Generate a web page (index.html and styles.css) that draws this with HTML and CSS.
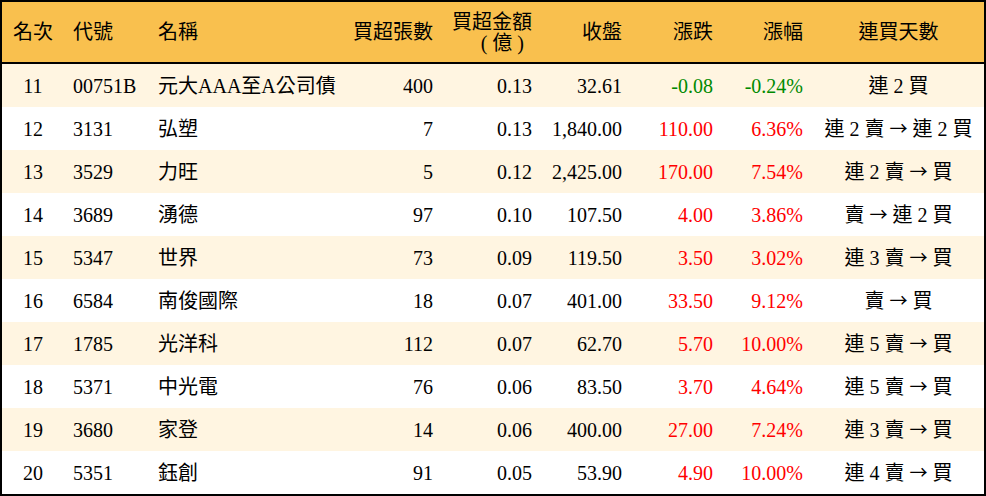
FILE: index.html
```html
<!DOCTYPE html>
<html lang="zh-Hant">
<head>
<meta charset="utf-8">
<title>買超排行</title>
<link rel="stylesheet" href="styles.css">
</head>
<body>
<table class="rank">
  <colgroup>
    <col class="c1"><col class="c2"><col class="c3"><col class="c4"><col class="c5"><col class="c6"><col class="c7"><col class="c8"><col class="c9">
  </colgroup>
  <thead>
    <tr>
      <th class="ctr">名次</th>
      <th class="lft l2">代號</th>
      <th class="lft l3">名稱</th>
      <th class="rgt">買超張數</th>
      <th class="rgt two"><span class="ln">買超金額</span><span class="ln sub">( 億 )</span></th>
      <th class="rgt">收盤</th>
      <th class="rgt">漲跌</th>
      <th class="rgt">漲幅</th>
      <th class="ctr">連買天數</th>
    </tr>
  </thead>
  <tbody>
    <tr class="odd"><td class="ctr">11</td><td class="lft l2">00751B</td><td class="lft l3">元大AAA至A公司債</td><td class="rgt">400</td><td class="rgt">0.13</td><td class="rgt">32.61</td><td class="rgt down">-0.08</td><td class="rgt down">-0.24%</td><td class="ctr">連 2 買</td></tr>
    <tr><td class="ctr">12</td><td class="lft l2">3131</td><td class="lft l3">弘塑</td><td class="rgt">7</td><td class="rgt">0.13</td><td class="rgt">1,840.00</td><td class="rgt up">110.00</td><td class="rgt up">6.36%</td><td class="ctr">連 2 賣 <span class="arw">→</span> 連 2 買</td></tr>
    <tr class="odd"><td class="ctr">13</td><td class="lft l2">3529</td><td class="lft l3">力旺</td><td class="rgt">5</td><td class="rgt">0.12</td><td class="rgt">2,425.00</td><td class="rgt up">170.00</td><td class="rgt up">7.54%</td><td class="ctr">連 2 賣 <span class="arw">→</span> 買</td></tr>
    <tr><td class="ctr">14</td><td class="lft l2">3689</td><td class="lft l3">湧德</td><td class="rgt">97</td><td class="rgt">0.10</td><td class="rgt">107.50</td><td class="rgt up">4.00</td><td class="rgt up">3.86%</td><td class="ctr">賣 <span class="arw">→</span> 連 2 買</td></tr>
    <tr class="odd"><td class="ctr">15</td><td class="lft l2">5347</td><td class="lft l3">世界</td><td class="rgt">73</td><td class="rgt">0.09</td><td class="rgt">119.50</td><td class="rgt up">3.50</td><td class="rgt up">3.02%</td><td class="ctr">連 3 賣 <span class="arw">→</span> 買</td></tr>
    <tr><td class="ctr">16</td><td class="lft l2">6584</td><td class="lft l3">南俊國際</td><td class="rgt">18</td><td class="rgt">0.07</td><td class="rgt">401.00</td><td class="rgt up">33.50</td><td class="rgt up">9.12%</td><td class="ctr">賣 <span class="arw">→</span> 買</td></tr>
    <tr class="odd"><td class="ctr">17</td><td class="lft l2">1785</td><td class="lft l3">光洋科</td><td class="rgt">112</td><td class="rgt">0.07</td><td class="rgt">62.70</td><td class="rgt up">5.70</td><td class="rgt up">10.00%</td><td class="ctr">連 5 賣 <span class="arw">→</span> 買</td></tr>
    <tr><td class="ctr">18</td><td class="lft l2">5371</td><td class="lft l3">中光電</td><td class="rgt">76</td><td class="rgt">0.06</td><td class="rgt">83.50</td><td class="rgt up">3.70</td><td class="rgt up">4.64%</td><td class="ctr">連 5 賣 <span class="arw">→</span> 買</td></tr>
    <tr class="odd"><td class="ctr">19</td><td class="lft l2">3680</td><td class="lft l3">家登</td><td class="rgt">14</td><td class="rgt">0.06</td><td class="rgt">400.00</td><td class="rgt up">27.00</td><td class="rgt up">7.24%</td><td class="ctr">連 3 賣 <span class="arw">→</span> 買</td></tr>
    <tr><td class="ctr">20</td><td class="lft l2">5351</td><td class="lft l3">鈺創</td><td class="rgt">91</td><td class="rgt">0.05</td><td class="rgt">53.90</td><td class="rgt up">4.90</td><td class="rgt up">10.00%</td><td class="ctr">連 4 賣 <span class="arw">→</span> 買</td></tr>
  </tbody>
</table>
</body>
</html>
```

FILE: styles.css
```css
html, body {
  margin: 0;
  padding: 0;
  background: #ffffff;
}

body {
  font-family: "Liberation Serif", "Noto Sans CJK TC", serif;
  font-size: 20px;
  color: #000000;
}

.rank {
  width: 986px;
  table-layout: fixed;
  border-collapse: separate;
  border-spacing: 0;
  border: 2px solid #000000;
  box-sizing: border-box;
}

.c1 { width: 62px; }
.c2 { width: 86px; }
.c3 { width: 190px; }
.c4 { width: 103px; }
.c5 { width: 99px; }
.c6 { width: 90px; }
.c7 { width: 91px; }
.c8 { width: 90px; }
.c9 { width: 171px; }

.rank th,
.rank td {
  padding: 0;
  white-space: nowrap;
  vertical-align: middle;
  font-weight: normal;
  overflow: hidden;
}

.rank th {
  height: 60px;
  background: #f9c04e;
  border-bottom: 2px solid #000000;
  line-height: 20px;
}

.rank th .ln {
  display: block;
  height: 20px;
  line-height: 20px;
}

.rank th .sub {
  margin-top: 1px;
  padding-right: 8px;
}

.rank td {
  height: 43px;
  line-height: 22px;
}

.rank tr.odd td {
  background: #fff5e1;
}

.arw {
  font-family: "Noto Sans CJK TC", sans-serif;
  font-size: 18px;
  line-height: 10px;
  display: inline-block;
  vertical-align: 1px;
}

.ctr { text-align: center; }
.lft { text-align: left; }
.rgt { text-align: right; padding-right: 10px !important; }
.l2 { padding-left: 9px !important; }
.l3 { padding-left: 8px !important; }

.up { color: #ff0000; }
.down { color: #008a00; }
```
